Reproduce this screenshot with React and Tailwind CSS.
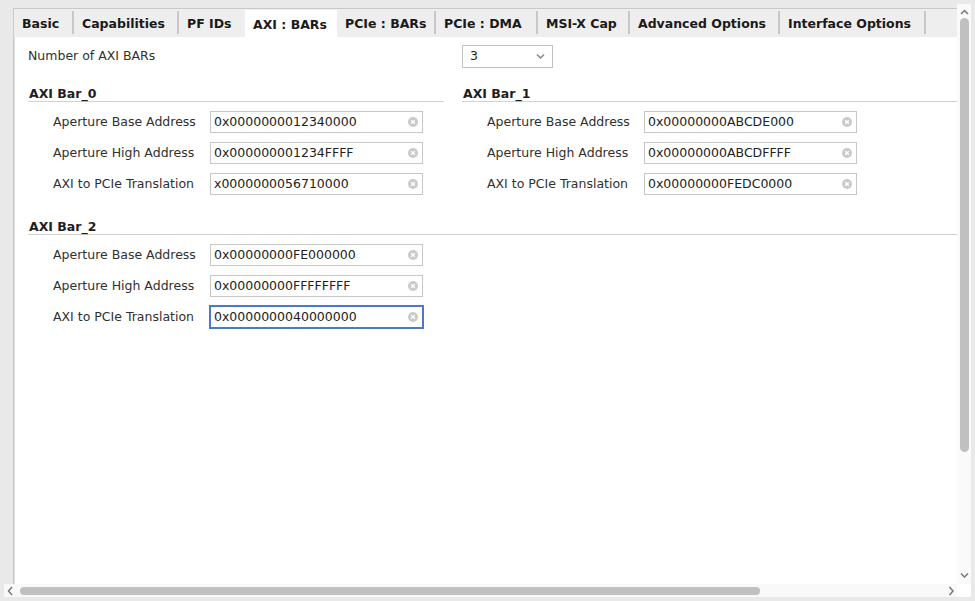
import React from 'react'

const tabs = [
  { label: 'Basic', w: 60 },
  { label: 'Capabilities', w: 105 },
  { label: 'PF IDs', w: 66 },
  { label: 'AXI : BARs', w: 92, active: true },
  { label: 'PCIe : BARs', w: 99 },
  { label: 'PCIe : DMA', w: 102 },
  { label: 'MSI-X Cap', w: 92 },
  { label: 'Advanced Options', w: 150 },
  { label: 'Interface Options', w: 146 },
]

const bars = [
  {
    title: 'AXI Bar_0',
    rows: [
      ['Aperture Base Address', '0x0000000012340000'],
      ['Aperture High Address', '0x000000001234FFFF'],
      ['AXI to PCIe Translation', 'x0000000056710000'],
    ],
  },
  {
    title: 'AXI Bar_1',
    rows: [
      ['Aperture Base Address', '0x00000000ABCDE000'],
      ['Aperture High Address', '0x00000000ABCDFFFF'],
      ['AXI to PCIe Translation', '0x00000000FEDC0000'],
    ],
  },
  {
    title: 'AXI Bar_2',
    rows: [
      ['Aperture Base Address', '0x00000000FE000000'],
      ['Aperture High Address', '0x00000000FFFFFFFF'],
      ['AXI to PCIe Translation', '0x0000000040000000'],
    ],
    focused: 2,
  },
]

function ClearIcon() {
  return (
    <svg width="10" height="10" viewBox="0 0 10 10" className="shrink-0">
      <circle cx="5" cy="5" r="5" fill="#cacaca" />
      <path d="M3.2 3.2 L6.8 6.8 M6.8 3.2 L3.2 6.8" stroke="#fff" strokeWidth="1.4" />
    </svg>
  )
}

function Chevron({ dir = 'down', color = '#888' }) {
  const d = {
    down: 'M1 1.5 L4.5 5 L8 1.5',
    up: 'M1 5 L4.5 1.5 L8 5',
  }[dir]
  return (
    <svg width="9" height="6" viewBox="0 0 9 6">
      <path d={d} fill="none" stroke={color} strokeWidth="1.5" />
    </svg>
  )
}

function SideChevron({ dir }) {
  const d = dir === 'left' ? 'M5 1 L1.5 5 L5 9' : 'M1.5 1 L5 5 L1.5 9'
  return (
    <svg width="6" height="10" viewBox="0 0 6 10">
      <path d={d} fill="none" stroke="#777" strokeWidth="1.5" />
    </svg>
  )
}

function Field({ value, focused }) {
  return (
    <div
      className={
        'w-[213px] h-[22px] bg-white flex items-center pl-[3px] pr-[4px] border ' +
        (focused
          ? 'border-[#4a7bc4] outline outline-1 outline-[#4a7bc4]'
          : 'border-[#c6c6c6]')
      }
    >
      <span className="flex-1 text-[#222] whitespace-nowrap leading-[16px]">{value}</span>
      <ClearIcon />
    </div>
  )
}

function Bar({ bar }) {
  return (
    <div>
      <div className="h-[19px] flex items-center pt-[3px] font-bold text-[#1e1e1e] border-b border-[#d2d2d2] pl-px">
        {bar.title}
      </div>
      <div className="flex flex-col gap-[9px] mt-[9px] pl-[25px]">
        {bar.rows.map(([label, value], i) => (
          <div key={label} className="flex items-center h-[22px]">
            <div className="w-[157px] text-[#303030] whitespace-nowrap">{label}</div>
            <Field value={value} focused={bar.focused === i} />
          </div>
        ))}
      </div>
    </div>
  )
}

export default function App() {
  return (
    <div
      className="w-[975px] h-[601px] bg-[#e9e9e9] flex flex-col overflow-hidden text-[12.5px] leading-[16px]"
      style={{ fontFamily: '"DejaVu Sans", "Liberation Sans", sans-serif' }}
    >
      <div className="flex flex-1 min-h-0">
        <div className="w-[13px] shrink-0" />

        {/* Viewport */}
        <div className="flex-1 mt-[8px] flex flex-col border-l border-t border-[#c9c9c9] bg-white min-w-0">
          {/* Tab bar */}
          <div className="h-[28px] bg-[#eeeeee] flex shrink-0">
            {tabs.map((t, i) => {
              const next = tabs[i + 1]
              const showSep = !t.active && !(next && next.active)
              return (
                <div
                  key={t.label}
                  style={{ width: t.w }}
                  className={
                    'relative h-full flex items-center pl-[8px] pt-[2px] font-bold text-[#1a1a1a] whitespace-nowrap shrink-0 ' +
                    (t.active ? 'bg-white mt-px' : '')
                  }
                >
                  {t.label}
                  {showSep && (
                    <span className="absolute right-0 top-[2px] w-[2px] h-[23px] bg-[#c8c8c8]" />
                  )}
                </div>
              )
            })}
          </div>

          {/* Content */}
          <div className="flex-1 border-l border-[#dddddd] pl-[13px] pt-[7px]">
            <div className="flex items-center h-[23px] pt-[1px]">
              <div className="w-[434px] text-[#303030]">Number of AXI BARs</div>
              <div className="w-[91px] h-[23px] border border-[#c2c2c2] flex items-center justify-between pl-[7px] pr-[7px] text-[#222]">
                <span>3</span>
                <Chevron />
              </div>
            </div>

            <div className="grid grid-cols-[416px_1fr] gap-x-[18px] mt-[16px]">
              <Bar bar={bars[0]} />
              <Bar bar={bars[1]} />
            </div>

            <div className="mt-[21px]">
              <Bar bar={bars[2]} />
            </div>
          </div>
        </div>

        {/* Vertical scrollbar */}
        <div className="w-[14px] shrink-0 mt-[4px] bg-[#fafafa] flex flex-col items-center">
          <div className="h-[12px] flex items-end pb-[1px]">
            <Chevron dir="up" color="#777" />
          </div>
          <div className="w-[9px] h-[434px] mt-[2px] rounded-full bg-[#c0c0c0]" />
          <div className="flex-1" />
          <div className="h-[12px] flex items-start">
            <Chevron dir="down" color="#777" />
          </div>
        </div>
        <div className="w-[4px] shrink-0" />
      </div>

      {/* Horizontal scrollbar */}
      <div className="h-[13px] flex shrink-0">
        <div className="w-[4px] shrink-0" />
        <div className="flex-1 bg-[#f9f9f9] flex items-center">
          <div className="w-[12px] flex justify-center">
            <SideChevron dir="left" />
          </div>
          <div className="w-[740px] h-[8px] ml-[4px] rounded-full bg-[#c0c0c0]" />
          <div className="flex-1" />
          <div className="w-[12px] flex justify-center">
            <SideChevron dir="right" />
          </div>
        </div>
        <div className="w-[14px] shrink-0 bg-white" />
        <div className="w-[4px] shrink-0" />
      </div>
      <div className="h-[4px] shrink-0" />
    </div>
  )
}
